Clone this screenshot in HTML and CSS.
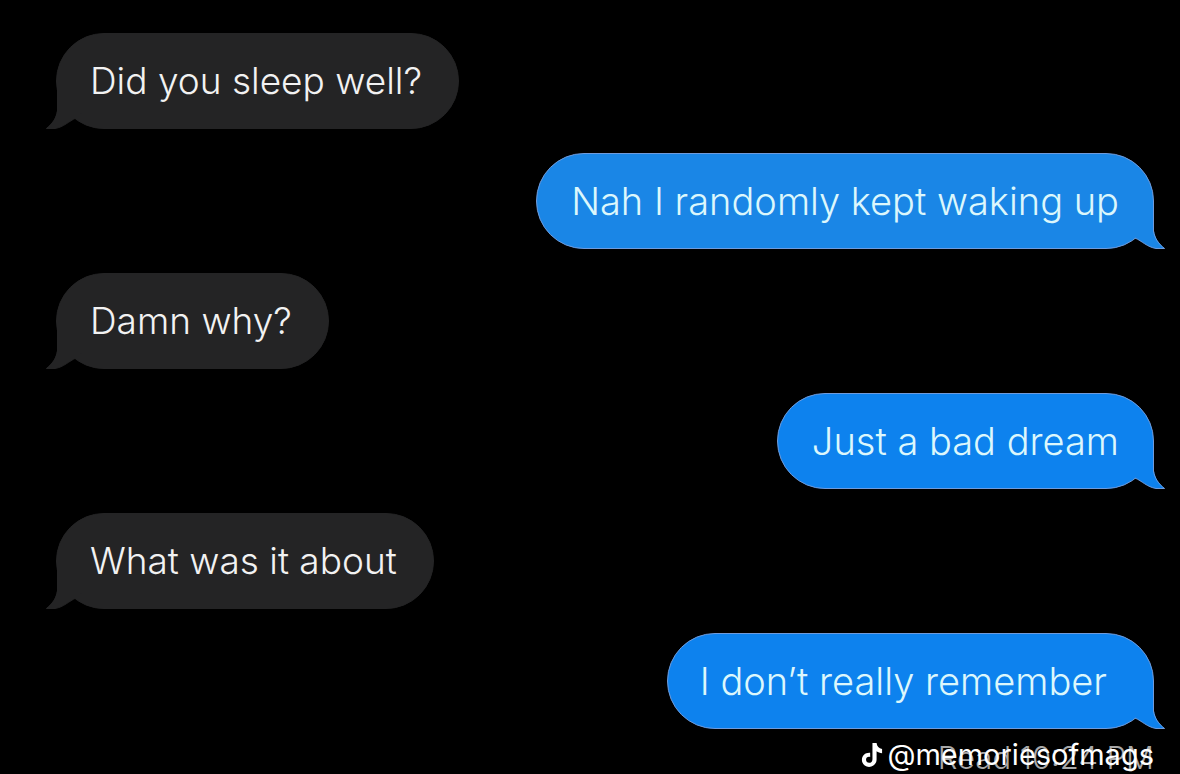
FILE: index.html
```html
<!DOCTYPE html>
<html lang="en">
<head>
    <meta charset="UTF-8">
    <meta name="viewport" content="width=device-width, initial-scale=1.0">
    <title>Messages</title>
    <link rel="stylesheet" href="styles.css">
</head>
<body>

    <!-- tail shape shared by all bubbles -->
    <svg class="defs" width="0" height="0">
        <symbol id="tail" viewBox="0 0 52 50">
            <path d="M40,1 V31 C41,38 45,44 51,48.500 H42 C33,47 28,41 21,38 L6,24 L6,1 Z" />
            <path class="edge" d="M39.500,1 V31 C40.500,38 44.500,44 50.500,48.500 H42 C33,47 28,41 21,38" />
        </symbol>
    </svg>

    <main class="chat">
        <div class="bubble received">Did you sleep well?<svg class="tail"><use href="#tail" /></svg></div>
        <div class="bubble sent muted">Nah I randomly kept waking up<svg class="tail"><use href="#tail" /></svg></div>
        <div class="bubble received">Damn why?<svg class="tail"><use href="#tail" /></svg></div>
        <div class="bubble sent">Just a bad dream<svg class="tail"><use href="#tail" /></svg></div>
        <div class="bubble received">What was it about<svg class="tail"><use href="#tail" /></svg></div>
        <div class="bubble sent last">I don’t really remember<svg class="tail"><use href="#tail" /></svg></div>

        <footer class="status">
            <span class="read">Read 10:24 PM</span>
            <span class="watermark">
                <svg class="note" viewBox="0 0 24 28">
                    <path d="M12.500,1 H17 C17.300,4.800 19.500,7 23,7.400 V12 C20.700,12 18.700,11.300 17,10 V18.500 C17,23.700 13.300,27 8.800,27 C4.300,27 1,23.500 1,19.200 C1,14.200 5,11 10,11.500 V16.200 C7.300,15.500 5.500,17 5.500,19.200 C5.500,21.200 7,22.500 8.800,22.500 C11,22.500 12.500,21 12.500,18.500 Z" />
                </svg>
                <span>@memoriesofmags</span>
            </span>
        </footer>
    </main>

</body>
</html>
```
FILE: styles.css
```css
* {
    box-sizing: border-box;
}

body {
    margin: 0;
    background-color: #000;
    font-family: Inter, "Liberation Sans", sans-serif;
}

.defs {
    position: absolute;
}

.chat {
    display: flex;
    flex-direction: column;
    align-items: flex-start;
    gap: 24px;
    padding: 33px 26px 0 56px;
}

.bubble {
    position: relative;
    padding: 0 34px;
    border: 1px solid transparent;
    border-radius: 48px;
    font-size: 37px;
    font-weight: 300;
    line-height: 94px;
    white-space: nowrap;
}

.received {
    padding: 0 36px 0 33px;
    background-color: #242425;
    border-color: #242425;
    color: #f2f2f2;
}

.sent {
    align-self: flex-end;
    background-color: #0d82ee;
    border-color: #6f9bdc;
    color: #dcf7fc;
    font-size: 38px;
}

.sent.muted {
    background-color: #1a86e6;
}

.sent.last {
    padding: 0 46px 0 32px;
}

.tail {
    position: absolute;
    right: -13px;
    bottom: -2px;
    width: 52px;
    height: 50px;
    fill: #0d82ee;
    --edge: #6f9bdc;
}

.muted .tail {
    fill: #1a86e6;
}

.received .tail {
    right: auto;
    left: -12px;
    fill: #242425;
    transform: scaleX(-1);
    --edge: #242425;
}

.edge {
    fill: none;
    stroke: var(--edge);
    stroke-width: 1px;
}

.status {
    position: relative;
    align-self: flex-end;
    margin-top: -10px;
    height: 30px;
    line-height: 30px;
    white-space: nowrap;
}

.read {
    color: #a8a8a8;
    font-size: 31px;
    font-weight: 300;
}

.watermark {
    position: absolute;
    right: 0;
    bottom: 3px;
    display: flex;
    align-items: center;
    gap: 4px;
    color: #fff;
    font-size: 29px;
}

.note {
    width: 22px;
    height: 26px;
    fill: #fff;
}
```
